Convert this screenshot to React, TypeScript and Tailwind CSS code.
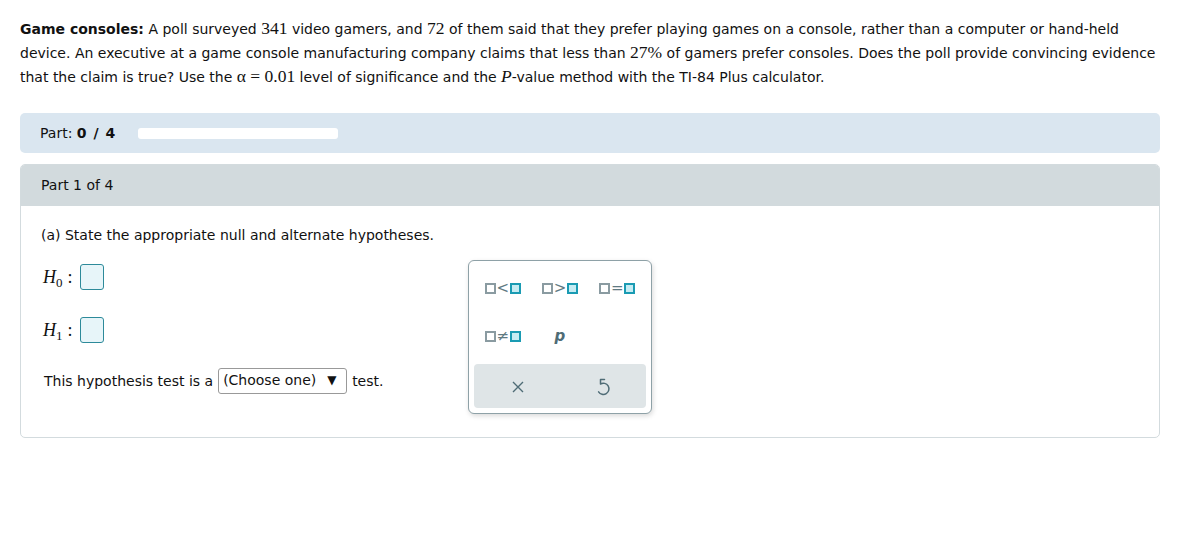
import React from "react";

const sans = { fontFamily: '"DejaVu Sans", Verdana, sans-serif' };
const serif = "font-['Liberation_Serif',serif]";

function M({ children, italic }: { children: React.ReactNode; italic?: boolean }) {
  return (
    <span className={`${serif} text-[17.5px] leading-none ${italic ? "italic" : ""}`}>{children}</span>
  );
}

function Sq({ active }: { active?: boolean }) {
  return (
    <span
      className={
        active
          ? "inline-block w-[11px] h-[11px] border-2 border-[#1a9bb3] bg-[#c6ecf3]"
          : "inline-block w-[11px] h-[11px] border-2 border-[#8a9ba1] bg-white"
      }
    />
  );
}

function Rel({ sym }: { sym: React.ReactNode }) {
  return (
    <div className="flex items-center justify-center gap-[2px] text-[#5f7a83] text-[15px] leading-none">
      <Sq />
      <span className="w-[10px] flex justify-center">{sym}</span>
      <Sq active />
    </div>
  );
}

function HBox() {
  return (
    <span className="inline-block w-[24px] h-[26px] rounded-[3px] border border-[#2d8a9a] bg-[#e7f5f9]" />
  );
}

function HLabel({ sub }: { sub: string }) {
  return (
    <>
      <span className={`${serif} italic text-[18px]`}>H</span>
      <span className={`${serif} text-[13px] mt-[12px]`}>{sub}</span>
      <span className={`${serif} text-[18px] ml-[5px] mr-[7px]`}>:</span>
    </>
  );
}

export default function App() {
  return (
    <div className="bg-white w-[1184px] h-[542px] text-[#111] text-[14px]" style={sans}>
      <div className="px-5 pt-[17px] leading-[24px]">
        <p>
          <b>Game consoles:</b> A poll surveyed <M>341</M> video gamers, and <M>72</M> of them said that they prefer
          playing games on a console, rather than a computer or hand-held device. An executive at a game console
          manufacturing company claims that less than <M>27%</M> of gamers prefer consoles. Does the poll provide
          convincing evidence that the claim is true? Use the <M>α = 0.01</M> level of significance and the{" "}
          <M italic>P</M>-value method with the TI-84 Plus calculator.
        </p>
      </div>

      <div className="ml-5 w-[1140px] mt-[24px] h-[40px] rounded-[5px] bg-[#dae6f0] flex items-center pl-5">
        <span>
          Part: <b className="tracking-[1px]">0 / 4</b>
        </span>
        <div className="ml-[22px] w-[200px] h-[11px] rounded-[3px] bg-white" />
      </div>

      <div className="ml-5 w-[1140px] mt-[11px] rounded-[5px] border border-[#d3dbde] overflow-hidden">
        <div className="h-[41px] bg-[#d2dadd] flex items-center pl-5">Part 1 of 4</div>
        <div className="h-[231px] pl-5 pt-[20px] flex">
          <div className="w-[427px]">
            <div className="leading-[18px]">(a) State the appropriate null and alternate hypotheses.</div>
            <div className="mt-[20px] flex items-center h-[26px] pl-[2px]">
              <HLabel sub="0" />
              <HBox />
            </div>
            <div className="mt-[27px] flex items-center h-[26px] pl-[2px]">
              <HLabel sub="1" />
              <HBox />
            </div>
            <div className="mt-[25px] flex items-center pl-[3px]">
              <span>This hypothesis test is a</span>
              <span className="ml-[5px] h-[26px] w-[129px] border border-[#999] rounded-[3px] flex items-center pl-[4px] pb-[2px]">
                (Choose one)
                <span className="ml-[11px] text-[12px]">▼</span>
              </span>
              <span className="ml-[5px]">test.</span>
            </div>
          </div>
          <div className="mt-[34px] w-[184px] h-[154px] rounded-[6px] border border-[#8ea1a7] shadow-[1px_2px_5px_rgba(0,0,0,0.15)] bg-white px-[5px] pt-[3px] flex flex-col">
            <div className="grid grid-cols-3 h-[48px]">
              <Rel sym={<span>&lt;</span>} />
              <Rel sym={<span>&gt;</span>} />
              <Rel sym={<span>=</span>} />
            </div>
            <div className="grid grid-cols-3 h-[48px]">
              <Rel sym={<span>≠</span>} />
              <div className="flex items-center justify-center">
                <span className="italic font-bold text-[#4f6c76] text-[15px] font-['DejaVu_Sans',sans-serif]">p</span>
              </div>
              <div />
            </div>
            <div className="mt-[4px] h-[44px] rounded-[4px] bg-[#dfe5e7] grid grid-cols-2">
              <div className="flex items-center justify-center">
                <svg width="14" height="14" viewBox="0 0 14 14" className="ml-[2px] mt-[2px]">
                  <path d="M2 2 L12 12 M12 2 L2 12" stroke="#4f6c76" strokeWidth="1.4" />
                </svg>
              </div>
              <div className="flex items-center justify-center">
                <svg width="16" height="20" viewBox="0 0 16 20" className="mt-[2px]">
                  <path
                    d="M9.5 2.5 H5.5 V7 M5.5 7 A5.6 5.6 0 1 1 3.6 14.8"
                    fill="none"
                    stroke="#4f6c76"
                    strokeWidth="1.5"
                    strokeLinecap="round"
                    strokeLinejoin="round"
                  />
                </svg>
              </div>
            </div>
          </div>
        </div>
      </div>
    </div>
  );
}
